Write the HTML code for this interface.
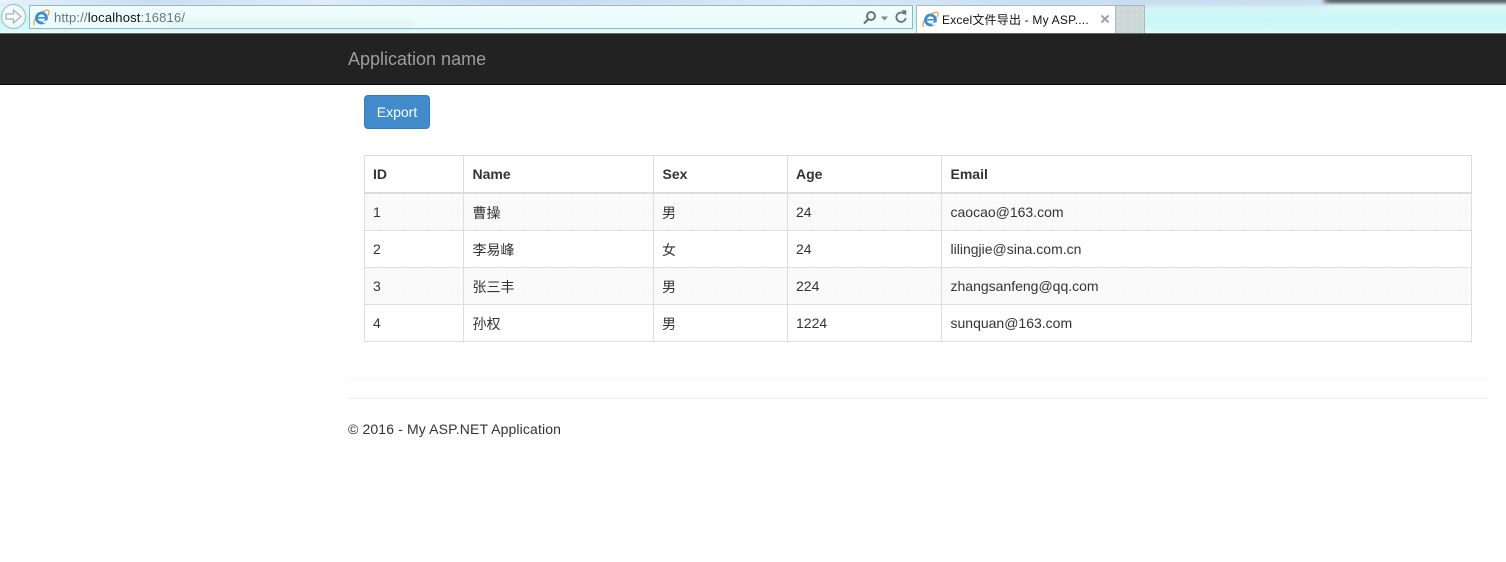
<!DOCTYPE html>
<html><head><meta charset="utf-8"><title>Excel文件导出</title>
<style>
html,body{margin:0;padding:0;background:#fff}
body{width:1506px;height:562px;position:relative;overflow:hidden;font-family:"Liberation Sans","Noto Sans CJK SC",sans-serif;font-size:14px;color:#333}
.a{position:absolute;white-space:nowrap}
#chrome{left:0;top:0;width:1506px;height:33px;overflow:hidden;background:linear-gradient(#d6e8f5 0,#d2e8f4 3px,#d9f9fa 7px,#c9f6f5 20px,#d6fafa 31px,#f4ffff 33px)}
#nav{left:0;top:33px;width:1506px;height:52px;background:#222;border-top:1px solid #666;box-sizing:border-box;border-bottom:1px solid #0a0a0a}
.line{background:#ddd;position:absolute}
.row{position:absolute;left:365px;width:1106px;height:36px;background-color:#f9faf9;background-image:radial-gradient(circle,#f1f3f3 .6px,transparent .9px);background-size:6px 6px}
.t{position:absolute;white-space:nowrap;line-height:20px}
.b{font-weight:bold}
.blur{position:absolute;filter:blur(3px)}
</style></head><body>
<div class="a" id="chrome">
<div class="blur" style="left:-10px;top:-3px;width:1340px;height:7px;background:linear-gradient(90deg,#eef6fb,#c4d9f0 12%,#e3eff9 25%,#bcd3ee 40%,#dcebf7 60%,#c2d8ef 80%,#e1eef8)"></div>
<div class="blur" style="left:1322px;top:-2px;width:200px;height:5px;background:#50555c;filter:blur(1.500px)"></div>
<div class="blur" style="left:1110px;top:-3px;width:215px;height:8px;background:#c7dbf0"></div>
</div>
<div class="a" style="left:29px;top:5px;width:884px;height:24px;box-sizing:border-box;background:linear-gradient(#f0fefe,#e9fcfc);border:1px solid #9fb2b8"></div>
<div class="blur" style="left:165px;top:21px;width:250px;height:5px;background:#c4d2d3;opacity:.3"></div>
<div class="a" style="left:1px;top:4px;width:25px;height:25px;box-sizing:border-box;border-radius:50%;border:1px solid #a5b5bd;background:#eefafb"></div>
<svg class="a" style="left:1px;top:4px" width="25" height="25" viewBox="0 0 25 25"><path d="M5 10h7.500V6l7.500 6.500-7.500 6.500v-4H5z" fill="#f7fbfb" stroke="#aab2b5" stroke-width="1.200"/></svg>
<svg class="a" style="left:33px;top:9px" width="17" height="17" viewBox="0 0 17 17"><path d="M1.500 16C-.5 12 4 5 11 2c2.500-1 5.500-1.500 5 1.500 0 1-.5 2-1 3" fill="none" stroke="#eba33d" stroke-width="1.300"/><circle cx="8.500" cy="9" r="5" fill="none" stroke="#3d8cd6" stroke-width="2.800"/><path d="M5 8.800h8" stroke="#3d8cd6" stroke-width="1.600"/><path d="M10 13.200l4.500-1" stroke="#effefe" stroke-width="2"/></svg>
<div class="a" style="left:54px;top:10px;font-size:13px;letter-spacing:.17px;line-height:16px;color:#6a7478">http://<span style="color:#111">localhost</span>:16816/</div>
<svg class="a" style="left:860px;top:9px" width="50" height="18" viewBox="0 0 50 18"><circle cx="11" cy="7" r="4" fill="none" stroke="#6a7576" stroke-width="2"/><path d="M8.500 10 4 14.500" stroke="#6a7576" stroke-width="2.200"/><path d="M21 7.500h7l-3.500 4z" fill="#7a8587"/><path d="M44.500 5a4.700 4.700 0 1 0 1.200 4" fill="none" stroke="#6a7576" stroke-width="1.800"/><path d="M41.500 1l5 .5-.5 5z" fill="#6a7576"/></svg>
<div class="a" style="left:916px;top:5px;width:200px;height:28px;box-sizing:border-box;background:#fff;border:1px solid #a9b8bc;border-bottom:0"></div>
<div class="a" style="left:1116px;top:5px;width:29px;height:28px;box-sizing:border-box;background-color:#cbd8d7;background-image:radial-gradient(circle,#dde7e6 .6px,transparent .9px);background-size:6px 6px;border:1px solid #a9b8bc;border-left:0;border-bottom:0"></div>
<svg class="a" style="left:922px;top:11px" width="17" height="17" viewBox="0 0 17 17"><path d="M1.500 16C-.5 12 4 5 11 2c2.500-1 5.500-1.500 5 1.500 0 1-.5 2-1 3" fill="none" stroke="#eba33d" stroke-width="1.300"/><circle cx="8.500" cy="9" r="5" fill="none" stroke="#3d8cd6" stroke-width="2.800"/><path d="M5 8.800h8" stroke="#3d8cd6" stroke-width="1.600"/><path d="M10 13.200l4.500-1" stroke="#fff" stroke-width="2"/></svg>
<div class="a" style="left:942px;top:12px;font-size:12px;letter-spacing:.2px;line-height:16px;color:#111">Excel文件导出 - My ASP....</div>
<svg class="a" style="left:1100px;top:14px" width="10" height="10" viewBox="0 0 10 10"><path d="M1.500 1.500l7 7M8.500 1.500l-7 7" stroke="#93a5aa" stroke-width="2"/></svg>

<div class="a" id="nav"></div>
<div class="a" style="left:348px;top:49px;font-size:18px;line-height:20px;color:#9d9d9d">Application name</div>

<div class="a" style="left:364px;top:95px;width:66px;height:34px;box-sizing:border-box;background:#428bca;border:1px solid #357ebd;border-radius:4px;color:#fff;text-align:center;line-height:32px">Export</div>

<div class="row" style="top:194px"></div>
<div class="row" style="top:268px"></div>
<div class="line" style="left:364px;top:155px;width:1108px;height:1px"></div>
<div class="line" style="left:364px;top:192px;width:1108px;height:2px"></div>
<div class="line" style="left:364px;top:230px;width:1108px;height:1px"></div>
<div class="line" style="left:364px;top:267px;width:1108px;height:1px"></div>
<div class="line" style="left:364px;top:304px;width:1108px;height:1px"></div>
<div class="line" style="left:364px;top:341px;width:1108px;height:1px"></div>
<div class="line" style="left:364px;top:155px;width:1px;height:187px"></div>
<div class="line" style="left:463px;top:155px;width:1px;height:187px"></div>
<div class="line" style="left:653px;top:155px;width:1px;height:187px"></div>
<div class="line" style="left:787px;top:155px;width:1px;height:187px"></div>
<div class="line" style="left:941px;top:155px;width:1px;height:187px"></div>
<div class="line" style="left:1471px;top:155px;width:1px;height:187px"></div>

<div class="t b" style="left:373px;top:164px">ID</div>
<div class="t b" style="left:472.500px;top:164px">Name</div>
<div class="t b" style="left:662.500px;top:164px">Sex</div>
<div class="t b" style="left:796px;top:164px">Age</div>
<div class="t b" style="left:950.500px;top:164px">Email</div>

<div class="t" style="left:373px;top:202px">1</div>
<div class="t" style="left:472.500px;top:203px">曹操</div>
<div class="t" style="left:662px;top:203px">男</div>
<div class="t" style="left:796px;top:202px">24</div>
<div class="t" style="left:950.500px;top:202px">caocao@163.com</div>

<div class="t" style="left:373px;top:239px">2</div>
<div class="t" style="left:472.500px;top:240px">李易峰</div>
<div class="t" style="left:662px;top:240px">女</div>
<div class="t" style="left:796px;top:239px">24</div>
<div class="t" style="left:950.500px;top:239px">lilingjie@sina.com.cn</div>

<div class="t" style="left:373px;top:276px">3</div>
<div class="t" style="left:472.500px;top:277px">张三丰</div>
<div class="t" style="left:662px;top:277px">男</div>
<div class="t" style="left:796px;top:276px">224</div>
<div class="t" style="left:950.500px;top:276px">zhangsanfeng@qq.com</div>

<div class="t" style="left:373px;top:313px">4</div>
<div class="t" style="left:472.500px;top:314px">孙权</div>
<div class="t" style="left:662px;top:314px">男</div>
<div class="t" style="left:796px;top:313px">1224</div>
<div class="t" style="left:950.500px;top:313px">sunquan@163.com</div>

<div class="a" style="left:348px;top:379px;width:1140px;height:1px;background:#f6f6f6"></div>
<div class="a" style="left:348px;top:398px;width:1140px;height:1px;background:#eee"></div>
<div class="t" style="left:348px;top:419px;letter-spacing:.13px">© 2016 - My ASP.NET Application</div>
</body></html>
